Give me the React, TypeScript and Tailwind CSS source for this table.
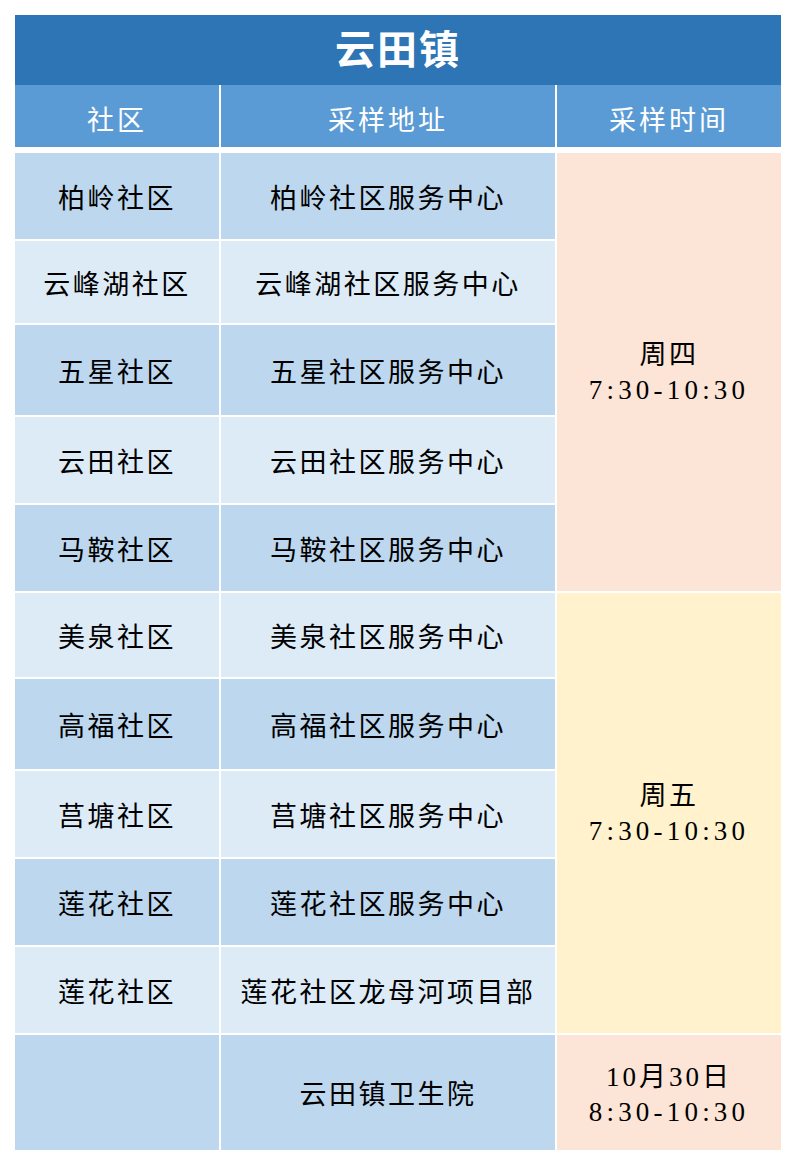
import React from "react";

const rows: { name: string; addr: string; h: string }[] = [
  { name: "柏岭社区", addr: "柏岭社区服务中心", h: "86px" },
  { name: "云峰湖社区", addr: "云峰湖社区服务中心", h: "82px" },
  { name: "五星社区", addr: "五星社区服务中心", h: "90px" },
  { name: "云田社区", addr: "云田社区服务中心", h: "86px" },
  { name: "马鞍社区", addr: "马鞍社区服务中心", h: "86px" },
  { name: "美泉社区", addr: "美泉社区服务中心", h: "84px" },
  { name: "高福社区", addr: "高福社区服务中心", h: "90px" },
  { name: "莒塘社区", addr: "莒塘社区服务中心", h: "86px" },
  { name: "莲花社区", addr: "莲花社区服务中心", h: "86px" },
  { name: "莲花社区", addr: "莲花社区龙母河项目部", h: "86px" },
  { name: "", addr: "云田镇卫生院", h: "115px" },
];

const font = {
  fontFamily: '"Liberation Serif", "Noto Sans CJK SC", serif',
};

export default function App() {
  return (
    <div className="min-h-screen bg-white pt-[15px] pl-[15px]" style={font}>
      <div className="w-[766px]">
        <div className="h-[70px] bg-[#2E75B6] flex items-center justify-center text-white text-[40px] font-bold tracking-[2px] leading-none pt-[2px]">
          云田镇
        </div>
        <div className="grid grid-cols-[204px_334px_224px] gap-x-[2px] h-[62px] bg-white text-white text-[27px] tracking-[3px] leading-none">
          <div className="bg-[#5B9BD5] flex items-center justify-center pt-[11px]">社区</div>
          <div className="bg-[#5B9BD5] flex items-center justify-center pt-[11px]">采样地址</div>
          <div className="bg-[#5B9BD5] flex items-center justify-center pt-[11px]">采样时间</div>
        </div>
        <div
          className="mt-[6px] grid grid-cols-[204px_334px_224px] gap-[2px] bg-white text-black text-[27px] tracking-[2.5px] leading-none grid-rows-[86px_82px_90px_86px_86px_84px_90px_86px_86px_86px_115px]"
        >
          {rows.map((r, i) => {
            const bg = i % 2 === 0 ? "bg-[#BDD7EE]" : "bg-[#DDEBF7]";
            return (
              <React.Fragment key={i}>
                <div
                  className={`${bg} flex items-center justify-center col-start-1 pt-[6px]`}
                  style={{ gridRowStart: i + 1 }}
                >
                  {r.name}
                </div>
                <div
                  className={`${bg} flex items-center justify-center col-start-2 pt-[6px]`}
                  style={{ gridRowStart: i + 1 }}
                >
                  {r.addr}
                </div>
              </React.Fragment>
            );
          })}
          <div className="bg-[#FCE4D6] col-start-3 row-start-1 row-span-5 flex flex-col items-center justify-center leading-[35px] pt-[2px]">
            <div>周四</div>
            <div className="tracking-[4.2px]">7:30-10:30</div>
          </div>
          <div className="bg-[#FFF2CC] col-start-3 row-start-6 row-span-5 flex flex-col items-center justify-center leading-[35px] pt-[2px]">
            <div>周五</div>
            <div className="tracking-[4.2px]">7:30-10:30</div>
          </div>
          <div className="bg-[#FCE4D6] col-start-3 row-start-11 flex flex-col items-center justify-center leading-[35px] pt-[4px]">
            <div className="tracking-[3px]">10月30日</div>
            <div className="tracking-[4.2px]">8:30-10:30</div>
          </div>
        </div>
      </div>
    </div>
  );
}
